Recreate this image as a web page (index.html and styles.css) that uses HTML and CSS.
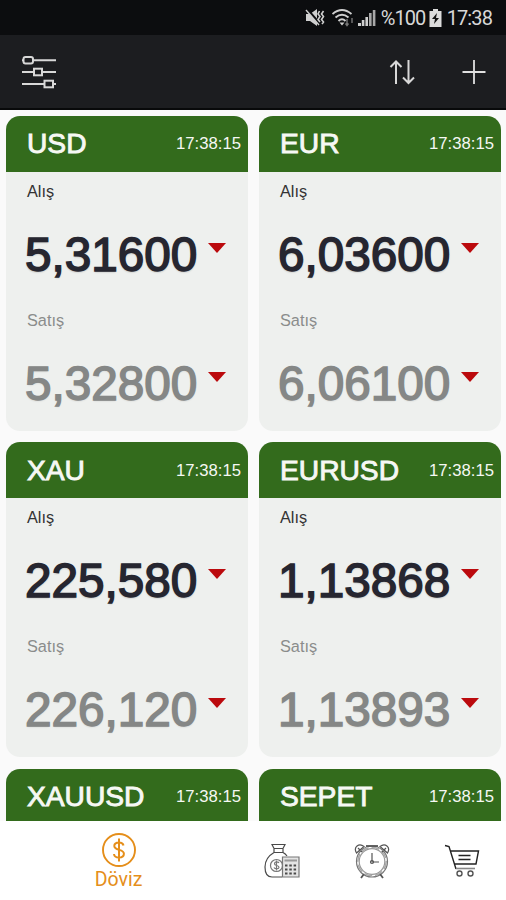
FILE: index.html
```html
<!DOCTYPE html>
<html lang="tr">
<head>
  <meta charset="UTF-8">
  <title>Döviz</title>
  <link rel="stylesheet" href="styles.css">
</head>
<body>
  <div class="status-bar">
    <svg class="icon-mute" width="20" height="20" viewBox="0 0 20 20">
      <path d="M1 6h4l7-5v17l-7-5H1z" fill="#cfcfcf"/>
      <path d="M2 1l13 15" stroke="#0c0d0f" stroke-width="2.6"/>
      <path d="M1 2l13 15" stroke="#cfcfcf" stroke-width="1.4"/>
      <path d="M14.500 3l-1.500 3 2 2.500-2 3 2 2.500M18.500 3l-2 3 2 2.500-2 3 2 2.500-1.500 2" fill="none" stroke="#cfcfcf" stroke-width="1.600"/>
    </svg>
    <svg class="icon-wifi" width="22" height="20" viewBox="0 0 22 20">
      <g fill="none" stroke="#cfcfcf" stroke-width="1.900">
        <path d="M.5 6q9.500-8 19 0"/>
        <path d="M3.500 9.500q6.500-5.500 13 0"/>
        <path d="M6.500 13q3.500-3.500 7 0"/>
      </g>
      <path d="M7.500 14.500h5L10 17.500z" fill="#cfcfcf"/>
      <path d="M15 11v6m-1.500-1.500l1.500 2 1.500-2M20 10v5" fill="none" stroke="#777" stroke-width="1.400"/>
    </svg>
    <svg class="icon-signal" width="18" height="20" viewBox="0 0 18 20">
      <path d="M0 15h3v3H0zM3.800 12h2.600v6H3.800zM7.400 9H10v9H7.400z" fill="#cfcfcf"/>
      <path d="M11 5h2.600v13H11zM14.800 2h2.600v16h-2.600z" fill="#a8a8a8"/>
    </svg>
    <span class="battery-level">%100</span>
    <svg class="icon-battery" width="13" height="20" viewBox="0 0 13 20">
      <path d="M4 1h5v2h3.500v16H.5V3H4z" fill="#dcdcdc"/>
      <path d="M8 5l-5 6h3l-1 5 5-6H7z" fill="#111"/>
    </svg>
    <span class="clock">17:38</span>
  </div>

  <header class="toolbar">
    <svg class="icon-filter" width="36" height="34" viewBox="0 0 36 34">
      <g fill="#1c1d20" stroke="#d8d8d8" stroke-width="2">
        <path d="M1 5.300h34M1 17h34M1 29h34"/>
        <rect x="2.500" y="2" width="9.500" height="6.600" rx="2"/>
        <rect x="13" y="13.700" width="8" height="6.600"/>
        <rect x="23.500" y="25.700" width="8.500" height="6.600"/>
      </g>
    </svg>
    <div class="actions">
      <svg width="26" height="26" viewBox="0 0 26 26">
        <path d="M7 25V3M1.500 8L7 2.500 12.500 8M19.500 1v22M14 18.500l5.500 5.500 5.500-5.500" fill="none" stroke="#d8d8d8" stroke-width="2"/>
      </svg>
      <svg width="24" height="26" viewBox="0 0 24 26">
        <path d="M.5 13h23M12 1v24" stroke="#e0e0e0" stroke-width="1.800"/>
      </svg>
    </div>
  </header>

  <main class="rates">
    <div class="card">
      <div class="card-header"><h2>USD</h2><span class="time">17:38:15</span></div>
      <div class="label">Alış</div>
      <div class="price">5,31600<i class="down"></i></div>
      <div class="label sell">Satış</div>
      <div class="price sell">5,32800<i class="down"></i></div>
    </div>
    <div class="card">
      <div class="card-header"><h2>EUR</h2><span class="time">17:38:15</span></div>
      <div class="label">Alış</div>
      <div class="price">6,03600<i class="down"></i></div>
      <div class="label sell">Satış</div>
      <div class="price sell">6,06100<i class="down"></i></div>
    </div>
    <div class="card">
      <div class="card-header"><h2>XAU</h2><span class="time">17:38:15</span></div>
      <div class="label">Alış</div>
      <div class="price">225,580<i class="down"></i></div>
      <div class="label sell">Satış</div>
      <div class="price sell">226,120<i class="down"></i></div>
    </div>
    <div class="card">
      <div class="card-header"><h2>EURUSD</h2><span class="time">17:38:15</span></div>
      <div class="label">Alış</div>
      <div class="price">1,13868<i class="down"></i></div>
      <div class="label sell">Satış</div>
      <div class="price sell">1,13893<i class="down"></i></div>
    </div>
    <div class="card">
      <div class="card-header"><h2>XAUUSD</h2><span class="time">17:38:15</span></div>
    </div>
    <div class="card">
      <div class="card-header"><h2>SEPET</h2><span class="time">17:38:15</span></div>
    </div>
  </main>

  <nav class="tabs">
    <a class="tab active">
      <svg width="36" height="36" viewBox="0 0 36 36" fill="none" stroke="#e58e1a">
        <circle cx="18" cy="18" r="16" stroke-width="1.900"/>
        <path d="M22.500 13.500c-.5-2-2-3-4.500-3-3 0-4.700 1.300-4.700 3.600 0 5 9.600 2.600 9.600 7.600 0 2.500-2 3.800-4.900 3.800s-4.800-1.300-5-3.500M18 6.500v23" stroke-width="2"/>
      </svg>
      <span>Döviz</span>
    </a>
    <a class="tab">
      <svg width="36" height="36" viewBox="0 0 36 36" fill="none" stroke="#4a4a4a" stroke-width="1.200">
        <path d="M8 1.500h13l-2 4h-9zM10 6v3.500h9V6M10 9.500C4 13 1 18 1 24c0 6 2 10 7 10h10M19 9.500c2 1 3 2 4 3.500"/>
        <circle cx="12.500" cy="22.500" r="6" stroke="#777"/>
        <path d="M15 20c-1-1.500-4.500-1.500-4.500.7 0 2.300 4.500 1.300 4.500 3.600 0 2-4 2-5 .2M12.500 17.500v10" stroke="#777"/>
        <path d="M18.500 14H35v20H18.500z" fill="#e4e4e4" stroke="#777"/>
        <path d="M20.500 17.500H33" stroke="#999" stroke-width="2"/>
        <path d="M21 22.500h11.500M21 26.500h11.500M21 30.500h11.500" stroke-width="2" stroke-dasharray="2.500 1.800"/>
      </svg>
    </a>
    <a class="tab">
      <svg width="36" height="36" viewBox="0 0 36 36" fill="none" stroke="#555" stroke-width="1.200">
        <circle cx="18" cy="18.500" r="15.500" stroke="#777"/>
        <circle cx="18" cy="18.500" r="12.800" stroke="#999"/>
        <circle cx="18" cy="18.500" r="14.200" stroke="#aaa" stroke-width="1.600" stroke-dasharray="8 3"/>
        <path d="M2.500 10C-1 4 5 -.5 10 3.500zM33.500 10C37 4 31 -.5 26 3.500zM4 5l4 4M32 5l-4 4" fill="#fff"/>
        <path d="M12 3h12" stroke-width="1.800"/>
        <path d="M10 31l-3 4M26 31l3 4" stroke-width="1.800"/>
        <path d="M18 10v9h7"/>
        <circle cx="18" cy="19" r="1.500"/>
      </svg>
    </a>
    <a class="tab">
      <svg width="36" height="36" viewBox="0 0 36 36" fill="none" stroke="#222" stroke-width="1.400">
        <path d="M1 2.500l4 1 7 22.500M6.500 8H34.500l-2.500 13H10.500"/>
        <path d="M14.500 12.500h12M14.500 16.500h12" stroke-width="1.600"/>
        <path d="M12 25.500h19" stroke="#888" stroke-width="1.600"/>
        <circle cx="15.500" cy="30.500" r="2.500" stroke="#555"/>
        <circle cx="26.500" cy="30.500" r="2.500" stroke="#555"/>
      </svg>
    </a>
  </nav>
</body>
</html>
```
FILE: styles.css
```css
* {
  box-sizing: border-box;
}
body {
  margin: 0;
  height: 900px;
  display: flex;
  flex-direction: column;
  overflow: hidden;
  font-family: "Liberation Sans", Arial, sans-serif;
  background: #fafafa;
}
.status-bar {
  height: 35px;
  flex: none;
  display: flex;
  align-items: center;
  justify-content: flex-end;
  padding-right: 14px;
  background: #0c0d0f;
  color: #d8d8d8;
  font-family: Roboto, sans-serif;
  font-size: 20px;
  letter-spacing: -0.9px;
}
.icon-wifi {
  margin-left: 7px;
}
.icon-signal {
  margin: 0 5px 0 4px;
}
.battery-level {
  width: 44px;
  white-space: nowrap;
}
.icon-battery {
  margin: 0 5px 0 4px;
}
.toolbar {
  height: 75px;
  flex: none;
  display: flex;
  align-items: center;
  justify-content: space-between;
  padding: 0 20px 0 21px;
  background: #1c1d20;
  border-bottom: 2px solid #08090a;
}
.actions {
  display: flex;
  gap: 47px;
}
.rates {
  height: 711px;
  flex: none;
  overflow: hidden;
  display: grid;
  grid-template-columns: 242px 242px;
  grid-auto-rows: 315px;
  align-content: start;
  gap: 11.300px 11px;
  padding: 6px 5px 0 6px;
}
.card {
  border-radius: 14px;
  overflow: hidden;
  background: #eef0ee;
}
.card-header {
  height: 55.500px;
  display: flex;
  align-items: center;
  justify-content: space-between;
  padding: 0 7px 0 21px;
  background: #336b1c;
  color: #f6f8f4;
}
.card-header h2 {
  margin: 0;
  font-size: 28.200px;
  font-weight: normal;
  -webkit-text-stroke: 0.900px #f6f8f4;
}
.time {
  padding-top: 1px;
  font-size: 16.700px;
}
.label {
  height: 38px;
  padding: 10px 0 0 21px;
  font-size: 16.300px;
  line-height: 19px;
  color: #333;
}
.price {
  height: 91px;
  display: flex;
  align-items: flex-start;
  padding: 18px 0 0 19px;
  font-size: 47.700px;
  line-height: 54px;
  color: #262630;
  text-shadow: 0 1px 2px rgba(0, 0, 0, 0.3);
  -webkit-text-stroke: 1.500px #262630;
}
.label.sell {
  color: #8a8c8b;
}
.price.sell {
  color: #858786;
  text-shadow: 0 1px 2px rgba(0, 0, 0, 0.15);
  -webkit-text-stroke-color: #858786;
}
.down {
  margin: 15px 0 0 11px;
  border: 9px solid transparent;
  border-top: 10px solid #bb0a0d;
  border-bottom: 0;
}
.tabs {
  flex: 1;
  display: grid;
  grid-template-columns: 237px 90px 90px 89px;
  background: #fff;
}
.tab {
  display: flex;
  flex-direction: column;
  align-items: center;
  padding-top: 22px;
}
.tab.active {
  padding-top: 11px;
  color: #e58e1a;
  font-family: Roboto, sans-serif;
  font-size: 19.500px;
  line-height: 24px;
}
```
